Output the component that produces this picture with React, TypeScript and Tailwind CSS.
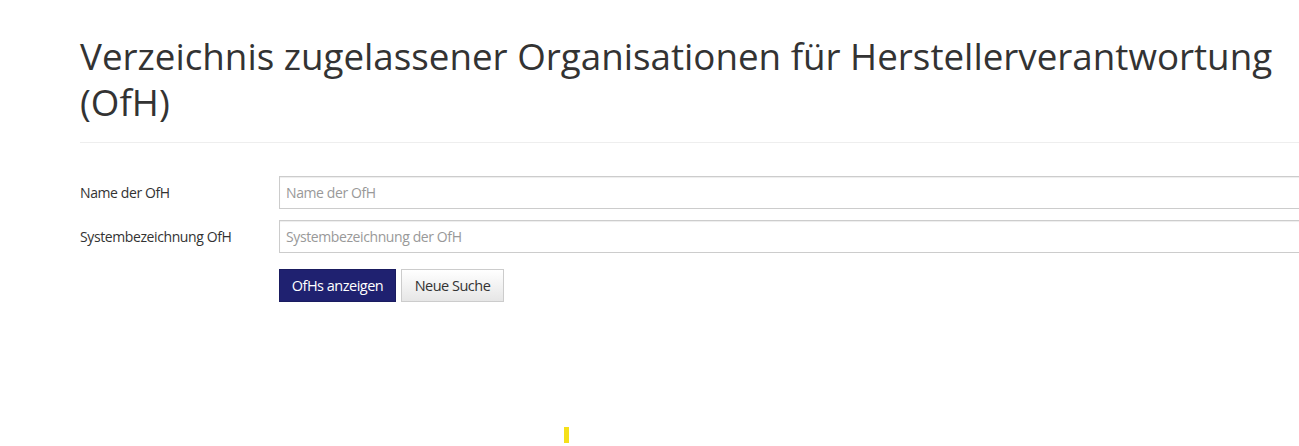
export default function App() {
  return (
    <div className="relative w-[1299px] h-[446px] overflow-hidden bg-white">
      <div className="w-[1340px] pl-[80px] pt-[33px]">
        <h1 className="w-[1230px] font-['Open_Sans',sans-serif] text-[36.75px] leading-[46px] text-[#333]">
          Verzeichnis zugelassener Organisationen für Herstellerverantwortung (OfH)
        </h1>
        <div className="mt-[17px] border-t border-[#eee]" />

        <form className="mt-[33px] flex flex-col gap-[11px] font-['Open_Sans',sans-serif] text-[14px] tracking-[-0.4px] text-[#333]">
          {[
            { label: "Name der OfH", placeholder: "Name der OfH" },
            { label: "Systembezeichnung OfH", placeholder: "Systembezeichnung der OfH" },
          ].map((row) => (
            <div key={row.label} className="flex items-center">
              <label className="w-[199px] shrink-0">{row.label}</label>
              <input
                type="text"
                placeholder={row.placeholder}
                className="flex-1 h-[33px] px-[6px] border border-[#ccc] shadow-[inset_0_1px_1px_rgba(0,0,0,0.075)] placeholder:text-[#999] outline-none"
              />
            </div>
          ))}

          <div className="flex gap-[5px] pl-[199px] mt-[5px]">
            <button
              type="button"
              className="h-[33px] w-[117px] bg-[#1f2170] border border-[#1a1c60] text-white text-[14.5px] tracking-[-0.5px]"
            >
              OfHs anzeigen
            </button>
            <button
              type="button"
              className="h-[33px] w-[103px] bg-gradient-to-b from-white to-[#e6e6e6] border border-[#ccc] text-[#333] text-[14.5px] tracking-[-0.5px]"
            >
              Neue Suche
            </button>
          </div>
        </form>
      </div>

      <div className="absolute left-[564px] top-[427px] w-[5px] h-[16px] bg-[#f5e01a]" />
    </div>
  );
}
